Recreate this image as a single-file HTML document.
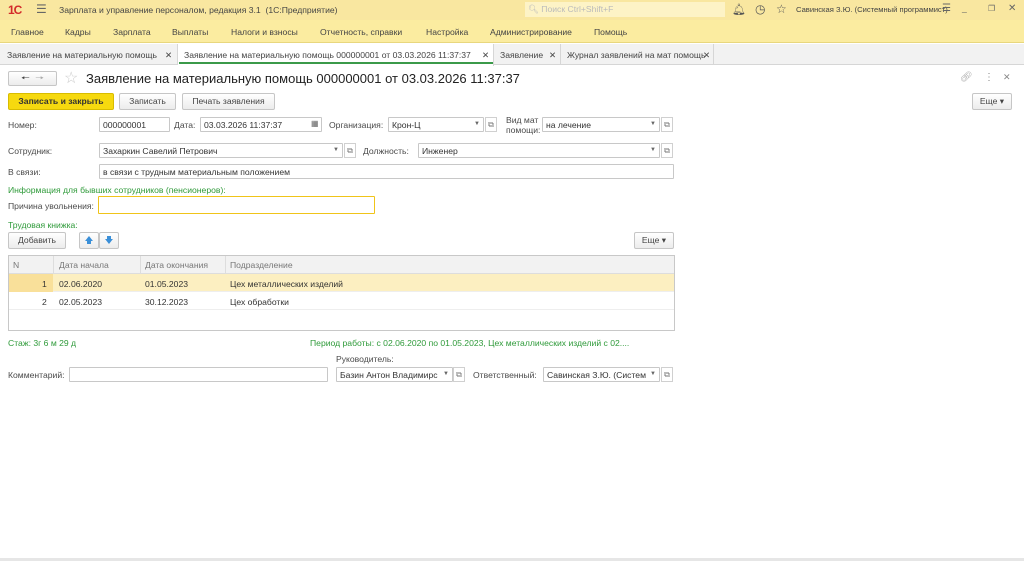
<!DOCTYPE html>
<html><head><meta charset="utf-8"><style>
*{box-sizing:border-box;margin:0;padding:0}
body{width:1024px;height:561px;position:relative;overflow:hidden;background:#fff;font-family:"Liberation Sans",sans-serif;font-size:8.6px;color:#4a4a4a}
.a{position:absolute;white-space:nowrap}
.inp{position:absolute;height:15px;border:1px solid #c8c8c8;background:#fff;padding:2px 3px;color:#333;font-size:8.6px;white-space:nowrap;overflow:hidden;border-radius:1px}
.btn{position:absolute;height:17px;border:1px solid #c6c6c6;background:linear-gradient(#fff,#ececec);border-radius:2px;text-align:center;line-height:15px;color:#444}
.dd{position:absolute;width:12px;height:15px;font-size:6px;text-align:center;line-height:15px;color:#666}
.op{position:absolute;width:12px;height:15px;border:1px solid #d0d0d0;background:#fff;font-size:8px;line-height:13px;text-align:center;color:#777}
.g{color:#2e9a39}
</style></head><body>
<div class="a" style="left:0;top:0;width:1024px;height:20px;background:#f9e7a0"></div>
<div class="a" style="left:8px;top:3px;font-size:12px;font-weight:bold;color:#d32b2b;letter-spacing:-1px">1С</div>
<div class="a" style="left:36px;top:2px;font-size:12px;color:#666">☰</div>
<div class="a" style="left:59px;top:5px;color:#444">Зарплата и управление персоналом, редакция 3.1 &nbsp;(1С:Предприятие)</div>
<div class="a" style="left:525px;top:2px;width:200px;height:15px;background:#fdf3c6"></div>
<div class="a" style="left:528px;top:4px;color:#bbb">🔍︎ Поиск Ctrl+Shift+F</div>
<div class="a" style="left:732px;top:3px;font-size:11px;color:#555">🔔︎</div>
<div class="a" style="left:755px;top:2px;font-size:12px;color:#555">◷</div>
<div class="a" style="left:776px;top:2px;font-size:12px;color:#555">☆</div>
<div class="a" style="left:796px;top:5px;font-size:7.6px;color:#444">Савинская З.Ю. (Системный программист)</div>
<div class="a" style="left:942px;top:3px;font-size:10px;color:#666">☰</div>
<div class="a" style="left:962px;top:3px;color:#666">_</div>
<div class="a" style="left:988px;top:4px;color:#666;font-size:8px">❐</div>
<div class="a" style="left:1008px;top:3px;color:#666;font-size:10px">✕</div>
<div class="a" style="left:0;top:20px;width:1024px;height:23px;background:#fbeca0;border-bottom:1px solid #e8d77e"></div>
<div class="a" style="top:27px;left:11px;color:#444">Главное</div>
<div class="a" style="top:27px;left:65px;color:#444">Кадры</div>
<div class="a" style="top:27px;left:113px;color:#444">Зарплата</div>
<div class="a" style="top:27px;left:172px;color:#444">Выплаты</div>
<div class="a" style="top:27px;left:231px;color:#444">Налоги и взносы</div>
<div class="a" style="top:27px;left:320px;color:#444">Отчетность, справки</div>
<div class="a" style="top:27px;left:426px;color:#444">Настройка</div>
<div class="a" style="top:27px;left:490px;color:#444">Администрирование</div>
<div class="a" style="top:27px;left:594px;color:#444">Помощь</div>
<div class="a" style="left:0;top:44px;width:1024px;height:21px;background:#f2f2f2;border-bottom:1px solid #d6d6d6"></div>
<div class="a" style="left:0;top:44px;width:178px;height:21px;border-right:1px solid #d6d6d6"></div>
<div class="a" style="left:7px;top:50px;color:#444">Заявление на материальную помощь</div><div class="a" style="left:165px;top:50px;color:#444">✕</div>
<div class="a" style="left:178px;top:44px;width:316px;height:22px;background:#fff;border-right:1px solid #d6d6d6"></div>
<div class="a" style="left:179px;top:62px;width:314px;height:2px;background:#3b9a4a"></div>
<div class="a" style="left:184px;top:50px;color:#444">Заявление на материальную помощь 000000001 от 03.03.2026 11:37:37</div><div class="a" style="left:482px;top:50px;color:#444">✕</div>
<div class="a" style="left:494px;top:44px;width:67px;height:21px;border-right:1px solid #d6d6d6"></div>
<div class="a" style="left:500px;top:50px;color:#444">Заявление</div><div class="a" style="left:549px;top:50px;color:#444">✕</div>
<div class="a" style="left:561px;top:44px;width:153px;height:21px;border-right:1px solid #d6d6d6"></div>
<div class="a" style="left:567px;top:50px;color:#444">Журнал заявлений на мат помощь</div><div class="a" style="left:703px;top:50px;color:#444">✕</div>
<div class="btn" style="left:8px;top:71px;width:49px;height:15px;line-height:13px;font-size:10px">🠔 &nbsp;<span style="color:#aaa">🠖</span></div>
<div class="a" style="left:64px;top:68px;font-size:16px;color:#ccc">☆</div>
<div class="a" style="left:86px;top:71px;font-size:13px;color:#222">Заявление на материальную помощь 000000001 от 03.03.2026 11:37:37</div>
<div class="a" style="left:960px;top:72px;color:#aaa;font-size:10px">🔗︎</div>
<div class="a" style="left:984px;top:72px;color:#888;font-size:10px">⋮</div>
<div class="a" style="left:1003px;top:72px;color:#888;font-size:9px">✕</div>
<div class="btn" style="left:8px;top:93px;width:106px;background:#f6d90f;border-color:#d8bc00;font-weight:bold;color:#333">Записать и закрыть</div>
<div class="btn" style="left:119px;top:93px;width:57px">Записать</div>
<div class="btn" style="left:182px;top:93px;width:93px">Печать заявления</div>
<div class="btn" style="left:972px;top:93px;width:40px">Еще ▾</div>

<div class="a" style="left:8px;top:120px">Номер:</div>
<div class="inp" style="left:99px;top:117px;width:71px">000000001</div>
<div class="a" style="left:174px;top:120px">Дата:</div>
<div class="inp" style="left:200px;top:117px;width:122px">03.03.2026 11:37:37</div>
<div class="a" style="left:311px;top:119px;font-size:8px;color:#666">▦</div>
<div class="a" style="left:329px;top:120px">Организация:</div>
<div class="inp" style="left:388px;top:117px;width:96px">Крон-Ц</div><div class="dd" style="left:471px;top:117px">▼</div>
<div class="op" style="left:485px;top:117px">⧉</div>
<div class="a" style="left:506px;top:115px;line-height:10px;white-space:normal;width:40px">Вид мат помощи:</div>
<div class="inp" style="left:542px;top:117px;width:118px">на лечение</div><div class="dd" style="left:647px;top:117px">▼</div>
<div class="op" style="left:661px;top:117px">⧉</div>

<div class="a" style="left:8px;top:146px">Сотрудник:</div>
<div class="inp" style="left:99px;top:143px;width:244px">Захаркин Савелий Петрович</div><div class="dd" style="left:330px;top:143px">▼</div>
<div class="op" style="left:344px;top:143px">⧉</div>
<div class="a" style="left:363px;top:146px">Должность:</div>
<div class="inp" style="left:418px;top:143px;width:242px">Инженер</div><div class="dd" style="left:647px;top:143px">▼</div>
<div class="op" style="left:661px;top:143px">⧉</div>

<div class="a" style="left:8px;top:167px">В связи:</div>
<div class="inp" style="left:99px;top:164px;width:575px">в связи с трудным материальным положением</div>
<div class="a g" style="left:8px;top:185px">Информация для бывших сотрудников (пенсионеров):</div>
<div class="a" style="left:8px;top:201px">Причина увольнения:</div>
<div class="inp" style="left:98px;top:196px;width:277px;height:18px;border-color:#f0c419"></div>
<div class="a g" style="left:8px;top:220px">Трудовая книжка:</div>
<div class="btn" style="left:8px;top:232px;width:58px">Добавить</div>
<div class="btn" style="left:79px;top:232px;width:20px;color:#3a8fd8">🡅</div>
<div class="btn" style="left:99px;top:232px;width:20px;color:#3a8fd8">🡇</div>
<div class="btn" style="left:634px;top:232px;width:40px">Еще ▾</div>

<div class="a" style="left:8px;top:255px;width:667px;height:76px;border:1px solid #c8c8c8"></div>
<div class="a" style="left:9px;top:256px;width:665px;height:18px;background:#f2f2f2;border-bottom:1px solid #ddd"></div>
<div class="a" style="left:53px;top:256px;width:1px;height:18px;background:#ddd"></div>
<div class="a" style="left:140px;top:256px;width:1px;height:18px;background:#ddd"></div>
<div class="a" style="left:225px;top:256px;width:1px;height:18px;background:#ddd"></div>
<div class="a" style="left:13px;top:260px;color:#777">N</div>
<div class="a" style="left:59px;top:260px;color:#777">Дата начала</div>
<div class="a" style="left:145px;top:260px;color:#777">Дата окончания</div>
<div class="a" style="left:230px;top:260px;color:#777">Подразделение</div>
<div class="a" style="left:9px;top:274px;width:665px;height:18px;background:#fcefc1;border-bottom:1px solid #eee"></div>
<div class="a" style="left:9px;top:274px;width:44px;height:18px;background:#f9e09a"></div>
<div class="a" style="left:42px;top:279px;color:#333">1</div>
<div class="a" style="left:59px;top:279px;color:#333">02.06.2020</div>
<div class="a" style="left:145px;top:279px;color:#333">01.05.2023</div>
<div class="a" style="left:230px;top:279px;color:#333">Цех металлических изделий</div>
<div class="a" style="left:9px;top:292px;width:665px;height:18px;border-bottom:1px solid #eee"></div>
<div class="a" style="left:42px;top:297px;color:#333">2</div>
<div class="a" style="left:59px;top:297px;color:#333">02.05.2023</div>
<div class="a" style="left:145px;top:297px;color:#333">30.12.2023</div>
<div class="a" style="left:230px;top:297px;color:#333">Цех обработки</div>

<div class="a g" style="left:8px;top:338px">Стаж: 3г 6 м 29 д</div>
<div class="a g" style="left:310px;top:338px">Период работы: с 02.06.2020 по 01.05.2023, Цех металлических изделий с 02....</div>
<div class="a" style="left:336px;top:354px">Руководитель:</div>
<div class="a" style="left:8px;top:370px">Комментарий:</div>
<div class="inp" style="left:69px;top:367px;width:259px"></div>
<div class="inp" style="left:336px;top:367px;width:117px">Базин Антон Владимирс</div><div class="dd" style="left:440px;top:367px">▼</div>
<div class="op" style="left:453px;top:367px">⧉</div>
<div class="a" style="left:473px;top:370px">Ответственный:</div>
<div class="inp" style="left:543px;top:367px;width:117px">Савинская З.Ю. (Систем</div><div class="dd" style="left:647px;top:367px">▼</div>
<div class="op" style="left:661px;top:367px">⧉</div>
<div class="a" style="left:0;top:558px;width:1024px;height:3px;background:#e6e6e6"></div>
</body></html>
